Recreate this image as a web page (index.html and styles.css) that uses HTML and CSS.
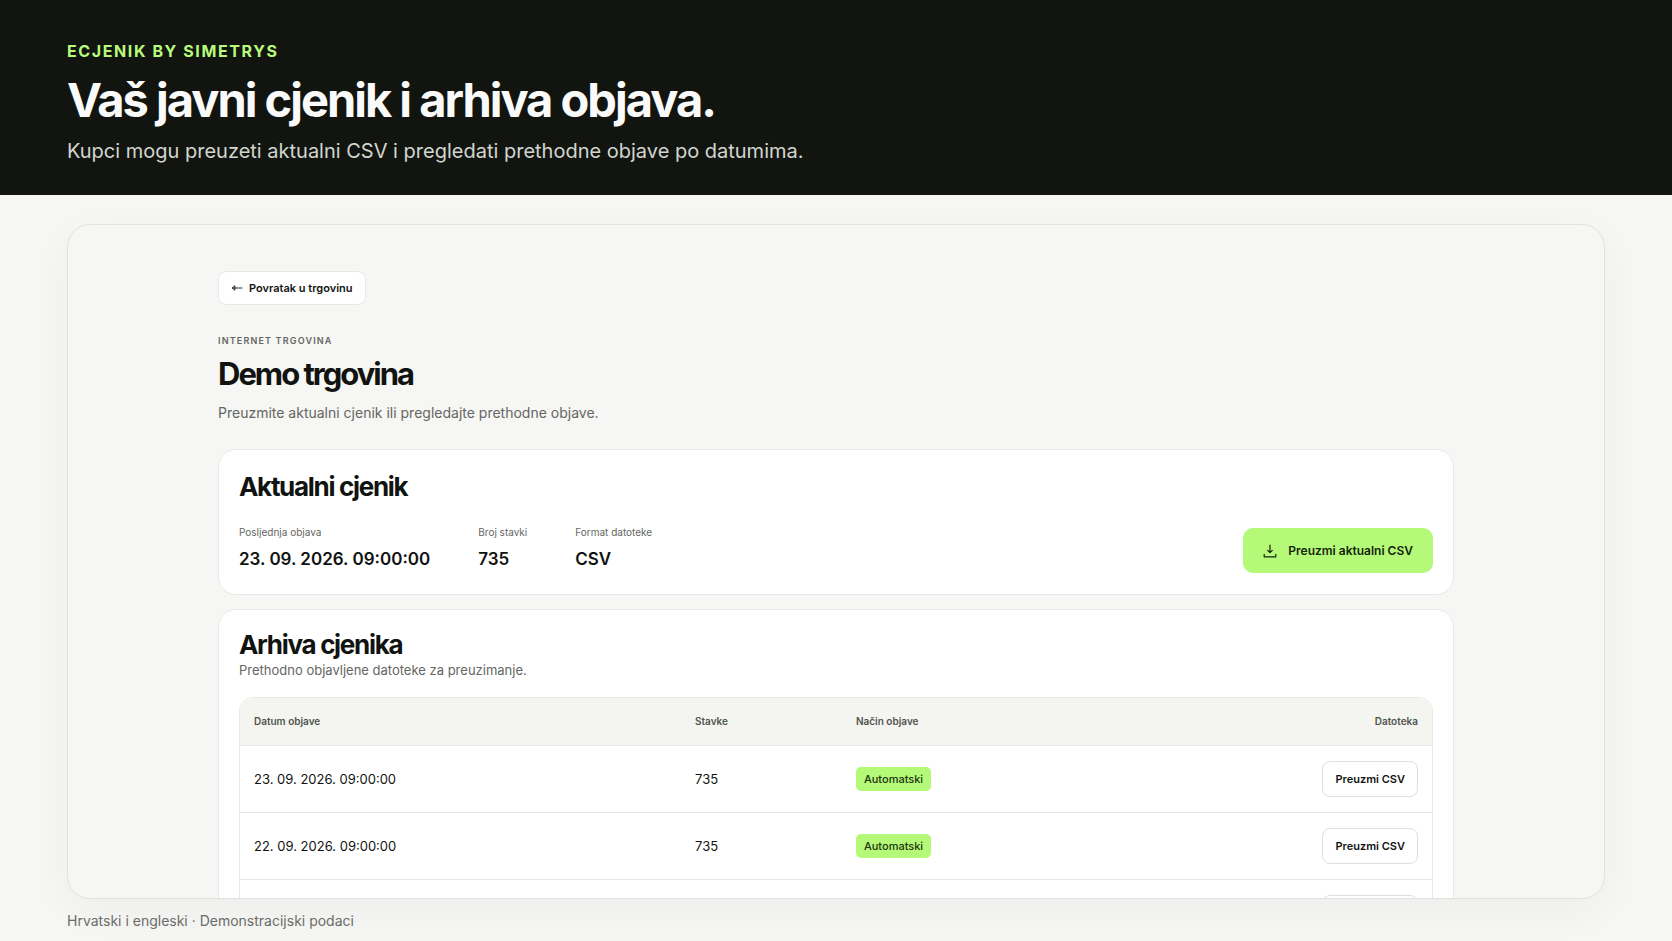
FILE: index.html
```html
<!DOCTYPE html>
<html lang="hr">
<head>
<meta charset="UTF-8">
<meta name="viewport" content="width=device-width, initial-scale=1.0">
<title>eCjenik by Simetrys</title>
<link rel="stylesheet" href="styles.css">
</head>
<body>

<header class="hero">
  <p class="hero-brand">ECJENIK BY SIMETRYS</p>
  <h1>Vaš javni cjenik i arhiva objava.</h1>
  <p class="hero-text">Kupci mogu preuzeti aktualni CSV i pregledati prethodne objave po datumima.</p>
</header>

<main class="frame">
  <div class="shop">
    <a class="back" href="#">
      <svg width="12" height="10" viewBox="0 0 12 10" fill="none" stroke="currentColor" stroke-width="0.9" stroke-linecap="round" stroke-linejoin="round"><path d="M11 5H1.400M3.600 3L1.200 5l2.400 2z"/></svg>
      Povratak u trgovinu
    </a>

    <p class="shop-type">INTERNET TRGOVINA</p>
    <h2 class="shop-name">Demo trgovina</h2>
    <p class="shop-text">Preuzmite aktualni cjenik ili pregledajte prethodne objave.</p>

    <section class="card current">
      <div>
        <h3>Aktualni cjenik</h3>
        <dl class="facts">
          <div>
            <dt>Posljednja objava</dt>
            <dd>23. 09. 2026. 09:00:00</dd>
          </div>
          <div>
            <dt>Broj stavki</dt>
            <dd>735</dd>
          </div>
          <div>
            <dt>Format datoteke</dt>
            <dd>CSV</dd>
          </div>
        </dl>
      </div>
      <button class="download" type="button">
        <svg width="14" height="14" viewBox="0 0 14 14" fill="none" stroke="currentColor" stroke-width="1.2" stroke-linecap="round" stroke-linejoin="round"><path d="M7 1v7.600M4.700 6.300L7 8.600l2.300-2.300M1.200 10.400v2.400h11.600v-2.400"/></svg>
        Preuzmi aktualni CSV
      </button>
    </section>

    <section class="card archive">
      <h3>Arhiva cjenika</h3>
      <p class="archive-text">Prethodno objavljene datoteke za preuzimanje.</p>
      <div class="table-wrap">
        <table>
          <thead>
            <tr>
              <th class="col-date">Datum objave</th>
              <th class="col-items">Stavke</th>
              <th>Način objave</th>
              <th class="col-file">Datoteka</th>
            </tr>
          </thead>
          <tbody>
            <tr>
              <td>23. 09. 2026. 09:00:00</td>
              <td>735</td>
              <td><span class="badge">Automatski</span></td>
              <td class="col-file"><button class="small" type="button">Preuzmi CSV</button></td>
            </tr>
            <tr>
              <td>22. 09. 2026. 09:00:00</td>
              <td>735</td>
              <td><span class="badge">Automatski</span></td>
              <td class="col-file"><button class="small" type="button">Preuzmi CSV</button></td>
            </tr>
            <tr>
              <td></td>
              <td></td>
              <td></td>
              <td class="col-file"><button class="small" type="button">Preuzmi CSV</button></td>
            </tr>
          </tbody>
        </table>
      </div>
    </section>
  </div>
</main>

<footer class="note">Hrvatski i engleski · Demonstracijski podaci</footer>

</body>
</html>
```
FILE: styles.css
```css
* {
  box-sizing: border-box;
}

body {
  display: flex;
  flex-direction: column;
  height: 100vh;
  margin: 0;
  overflow: hidden;
  font-family: Inter, "Liberation Sans", sans-serif;
  color: #111310;
  background-color: #f6f6f4;
}

h1, h2, h3, p, dl, dd {
  margin: 0;
}

button {
  font-family: inherit;
  cursor: pointer;
}

.hero {
  flex: none;
  padding: 41px 67px 31px;
  background-color: #12150f;
}

.hero-brand {
  font-size: 16px;
  line-height: 20px;
  font-weight: 700;
  letter-spacing: 0.1em;
  color: #b8fa7c;
}

.hero h1 {
  margin-top: 11px;
  font-size: 47px;
  line-height: 56px;
  font-weight: 700;
  letter-spacing: -2px;
  color: #fafafa;
}

.hero-text {
  margin-top: 10px;
  font-size: 20px;
  line-height: 26px;
  color: #d3d5d0;
}

.frame {
  flex: 1;
  min-height: 0;
  margin: 29px 67px 0;
  overflow: hidden;
  border: 1px solid #e1e1df;
  border-radius: 23px;
  background-color: #f6f6f4;
  box-shadow: 0 12px 44px rgba(18, 21, 15, 0.04);
}

.shop {
  max-width: 1236px;
  margin: 0 auto;
  padding-top: 46px;
}

.back {
  display: inline-flex;
  align-items: center;
  gap: 6px;
  height: 34px;
  padding: 0 12px;
  border: 1px solid #e8e8e6;
  border-radius: 8px;
  font-size: 11px;
  font-weight: 600;
  color: #111310;
  text-decoration: none;
  background-color: #fff;
}

.shop-type {
  margin-top: 30px;
  font-size: 9px;
  line-height: 12px;
  font-weight: 600;
  letter-spacing: 0.13em;
  color: #646662;
}

.shop-name {
  margin-top: 8px;
  font-size: 31px;
  line-height: 38px;
  font-weight: 700;
  letter-spacing: -2px;
}

.shop-text {
  margin-top: 10px;
  font-size: 14px;
  line-height: 20px;
  color: #646662;
}

.card {
  margin-top: 14px;
  padding: 19px 20px;
  border: 1px solid #e8e8e6;
  border-radius: 18px;
  background-color: #fff;
}

.card h3 {
  font-size: 26px;
  line-height: 32px;
  font-weight: 700;
  letter-spacing: -0.05em;
}

.current {
  display: flex;
  align-items: flex-end;
  justify-content: space-between;
  margin-top: 26px;
  padding: 21px 20px;
}

.facts {
  display: flex;
  gap: 48px;
  margin: 22px 0 2px;
}

.facts dt {
  font-size: 10px;
  line-height: 14px;
  color: #646662;
}

.facts dd {
  margin-top: 8px;
  font-size: 17px;
  line-height: 24px;
  font-weight: 600;
}

.download {
  display: flex;
  align-items: center;
  gap: 11px;
  height: 45px;
  padding: 0 20px;
  border: none;
  border-radius: 10px;
  font-size: 12px;
  font-weight: 600;
  color: #16240c;
  background-color: #b4fa78;
}

.archive-text {
  font-size: 13px;
  line-height: 18px;
  color: #646662;
}

.table-wrap {
  margin-top: 18px;
  overflow: hidden;
  border: 1px solid #e8e8e6;
  border-radius: 14px 14px 0 0;
}

table {
  width: 100%;
  table-layout: fixed;
  border-collapse: collapse;
}

th {
  height: 47px;
  padding: 0 14px;
  font-size: 10px;
  font-weight: 600;
  text-align: left;
  color: #51544e;
  background-color: #f4f5f1;
}

td {
  height: 67px;
  padding: 0 14px;
  border-top: 1px solid #e8e8e6;
  font-size: 13px;
}

.col-date {
  width: 37%;
}

.col-items {
  width: 13.5%;
}

.col-file {
  text-align: right;
}

.badge {
  display: inline-block;
  padding: 0 8px;
  border-radius: 5px;
  font-size: 11px;
  line-height: 24px;
  font-weight: 500;
  color: #21350f;
  background-color: #b4fa78;
}

.small {
  height: 36px;
  padding: 0 12px;
  border: 1px solid #dededc;
  border-radius: 8px;
  font-size: 11px;
  font-weight: 600;
  color: #111310;
  background-color: #fff;
}

.note {
  flex: none;
  padding: 12px 67px 10px;
  font-size: 14px;
  line-height: 20px;
  color: #6b6d68;
}
```
